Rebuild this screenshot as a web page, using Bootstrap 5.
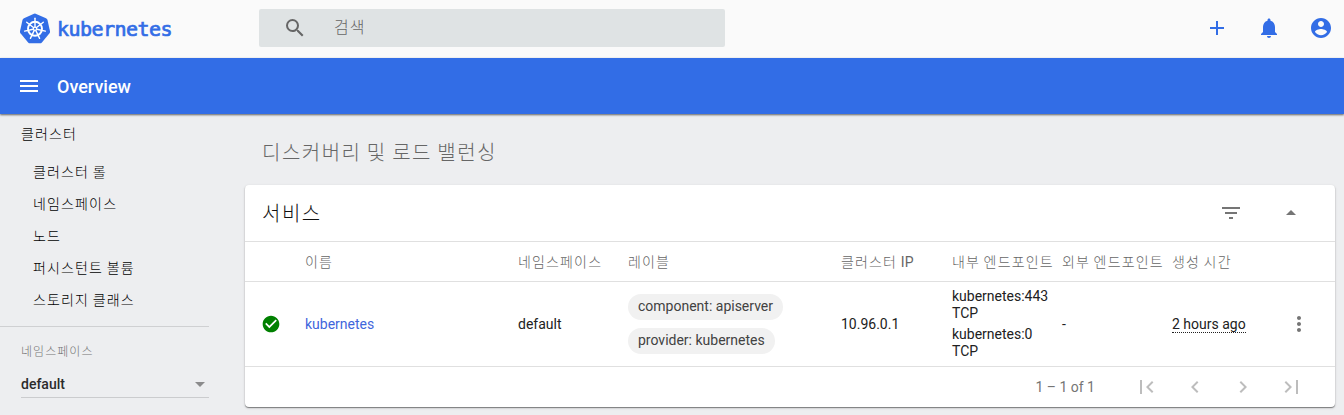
<!DOCTYPE html>
<html lang="ko">
<head>
<meta charset="utf-8">
<meta name="viewport" content="width=device-width, initial-scale=1">
<title>Kubernetes Dashboard</title>
<link href="https://cdn.jsdelivr.net/npm/bootstrap@5.3.0/dist/css/bootstrap.min.css" rel="stylesheet">
<style>
  body { font-family: Roboto, "Noto Sans CJK KR", sans-serif; font-size: 14px; line-height: 17px; background: #edeef0; color: #212121; height: 100vh; overflow: hidden; }
  svg { display: block; flex: none; fill: currentColor; }
  .ko { font-family: Roboto, "Noto Sans CJK KR", sans-serif; font-weight: 300; letter-spacing: 1.15px; word-spacing: -1px; white-space: nowrap; }
  .topbar { height: 58px; background: #fafafa; color: #326de6; }
  .brand { width: 239px; gap: 7px; margin-top: -2px; }
  .wordmark { font: 20px/24px "DejaVu Sans Mono", monospace; letter-spacing: -.55px; -webkit-text-stroke: .7px #326de6; padding-top: 2px; }
  .searchbox { width: 466px; height: 38px; background: #dfe3e4; border-radius: 2px; color: #666; padding-left: 24px; margin-top: -2px; }
  .search-hint { padding: 0 0 2px 27px; }
  .top-tools { gap: 28px; padding-right: 11px; margin-top: -2px; }
  .actionbar { height: 56px; background: #326de6; color: #fff; box-shadow: 0 1px 2px rgba(0,0,0,.6); position: relative; font-size: 18px; font-weight: 500; }
  .sidebar { width: 209px; color: #000; }
  .sidebar .nav-link { height: 32px; line-height: 32px; padding: 0 0 0 33px; color: #000; }
  .side-title { height: 42px; line-height: 41px; padding-left: 21px; }
  .ns-box { border-top: 1px solid #cfd0d2; margin-top: 10px; padding: 17px 0 0 21px; }
  .ns-label { font-size: 12px; line-height: 16px; color: #757575; letter-spacing: 1.05px; }
  .ns-select { height: 38px; padding-top: 16px; border-bottom: 1px solid #cbccce; font-weight: 500; color: #2b2b2c; }
  .caret { color: #8b8b8c; margin: 6px 4px 0 0; }
  .page-title { font-size: 20px; line-height: 24px; color: #666; letter-spacing: 1.5px; padding: 2px 0 0 17px; margin-top: 25px; height: 46px; }
  .panel { width: 1090px; border: 0; border-radius: 4px; box-shadow: 0 1px 1px rgba(0,0,0,.42), 0 1px 3px rgba(0,0,0,.16); }
  .panel-head { height: 57px; border-bottom: 1px solid #e0e0e0; padding: 0 32px 0 17px; }
  .panel-head h2 { font-size: 20px; letter-spacing: 1.5px; margin: 0; padding-top: 2px; color: #111; }
  .panel-head .tools { gap: 36px; color: #757575; }
  .services { table-layout: fixed; width: 1090px; margin: 0; color: #212121; border-collapse: separate; border-spacing: 0; }
  .services th, .services td { padding: 0; border-bottom: 1px solid #e0e0e0; vertical-align: middle; }
  .services th { height: 40px; color: #666; padding-top: 1px; }
  .services td { height: 85px; }
  .services a { color: #3f66dc; text-decoration: none; }
  .chip { display: block; width: fit-content; height: 26px; line-height: 24px; padding: 0 10px; border-radius: 13px; background: #f1f1f1; color: #424242; }
  .chip + .chip { margin-top: 8px; }
  .age { border-bottom: 1px dotted #212121; line-height: 15px; display: inline-block; margin-top: 1px; }
  .pager { height: 40px; color: #bdbdbd; padding-right: 32px; gap: 24px; }
  .pager .range { color: #757575; margin-right: 16px; }
</style>
</head>
<body>
<header class="topbar d-flex align-items-center">
  <div class="brand d-flex align-items-center flex-shrink-0 ms-3 ps-1 me-1">
    <svg width="30" height="31" viewBox="0 0 30 31">
      <path d="M15 .5 26 5.2q1.2.6 1.5 1.8L30 18.2q.2 1.1-.5 2l-7.6 9.2q-.8.9-2 .9h-9.800q-1.200 0-2-.9L.5 20.200q-.7-.9-.5-2L2.500 7q.3-1.200 1.500-1.800L14 .7q.5-.2 1-.2Z"/>
      <g fill="none" stroke="#fff" stroke-linecap="round">
        <circle cx="15" cy="15.800" r="7" stroke-width="1.900"/>
        <circle cx="15" cy="15.800" r="1.600" stroke-width="1.200"/>
        <g stroke-width="1.400">
          <path id="spoke" d="M15 13.800V5.200"/>
          <use href="#spoke" transform="rotate(51.430 15 15.800)"/>
          <use href="#spoke" transform="rotate(102.860 15 15.800)"/>
          <use href="#spoke" transform="rotate(154.290 15 15.800)"/>
          <use href="#spoke" transform="rotate(205.710 15 15.800)"/>
          <use href="#spoke" transform="rotate(257.140 15 15.800)"/>
          <use href="#spoke" transform="rotate(308.570 15 15.800)"/>
        </g>
      </g>
    </svg>
    <span class="wordmark">kubernetes</span>
  </div>
  <div class="searchbox d-flex align-items-center">
    <svg width="24" height="24" viewBox="0 0 24 24"><path d="M15.500 14h-.79l-.28-.27A6.471 6.471 0 0 0 16 9.500 6.500 6.500 0 1 0 9.500 16c1.610 0 3.090-.59 4.230-1.570l.27.28v.79l5 4.990L20.490 19l-4.990-5zm-6 0C7.010 14 5 11.990 5 9.500S7.010 5 9.500 5 14 7.010 14 9.500 11.990 14 9.500 14z"/></svg>
    <span class="search-hint ko fs-6">검색</span>
  </div>
  <div class="top-tools d-flex ms-auto">
    <svg width="24" height="24" viewBox="0 0 24 24"><path d="M19 13h-6v6h-2v-6H5v-2h6V5h2v6h6v2z"/></svg>
    <svg width="24" height="24" viewBox="0 0 24 24"><path d="M12 22c1.100 0 2-.9 2-2h-4c0 1.100.89 2 2 2zm6-6v-5c0-3.070-1.640-5.640-4.500-6.320V4c0-.83-.67-1.500-1.500-1.500s-1.500.67-1.500 1.500v.68C7.630 5.360 6 7.920 6 11v5l-2 2v1h16v-1l-2-2z"/></svg>
    <svg width="24" height="24" viewBox="0 0 24 24"><path d="M12 2C6.480 2 2 6.480 2 12s4.480 10 10 10 10-4.480 10-10S17.520 2 12 2zm0 3c1.660 0 3 1.340 3 3s-1.340 3-3 3-3-1.340-3-3 1.340-3 3-3zm0 14.200c-2.500 0-4.710-1.280-6-3.220.03-1.990 4-3.080 6-3.080 1.990 0 5.970 1.090 6 3.080-1.290 1.940-3.500 3.220-6 3.220z"/></svg>
  </div>
</header>
<div class="actionbar d-flex align-items-center">
  <svg class="ms-3" width="26" height="24" viewBox="1 0 24 24"><path d="M4 18h18v-2H4v2zm0-5h18v-2H4v2zm0-7v2h18V6H4z"/></svg>
  <span style="padding-left:15px">Overview</span>
</div>
<div class="d-flex">
  <nav class="sidebar flex-shrink-0">
    <div class="side-title ko">클러스터</div>
    <div class="nav flex-column ko">
      <a class="nav-link" href="#">클러스터 롤</a>
      <a class="nav-link" href="#">네임스페이스</a>
      <a class="nav-link" href="#">노드</a>
      <a class="nav-link" href="#">퍼시스턴트 볼륨</a>
      <a class="nav-link" href="#">스토리지 클래스</a>
    </div>
    <div class="ns-box">
      <div class="ns-label ko">네임스페이스</div>
      <div class="ns-select d-flex justify-content-between">
        <span>default</span>
        <svg class="caret" width="10" height="5" viewBox="0 0 10 5"><path d="M0 0h10L5 5z"/></svg>
      </div>
    </div>
  </nav>
  <main style="padding-left:36px">
    <h1 class="page-title ko mb-0">디스커버리 및 로드 밸런싱</h1>
    <section class="card panel">
      <div class="panel-head d-flex align-items-center justify-content-between">
        <h2 class="ko">서비스</h2>
        <div class="tools d-flex">
          <svg width="24" height="24" viewBox="0 0 24 24"><path d="M10 18h4v-2h-4v2zM3 6v2h18V6H3zm3 7h12v-2H6v2z"/></svg>
          <svg width="24" height="24" viewBox="0 0 24 24"><path d="m7 14 5-5 5 5z"/></svg>
        </div>
      </div>
      <table class="table services">
        <colgroup><col style="width:60px"><col style="width:213px"><col style="width:110px"><col style="width:213px"><col style="width:111px"><col style="width:110px"><col style="width:110px"><col></colgroup>
        <thead>
          <tr><th></th><th class="ko">이름</th><th class="ko">네임스페이스</th><th class="ko">레이블</th><th class="ko">클러스터 <span style="letter-spacing:.2px;font-weight:400">IP</span></th><th class="ko">내부 엔드포인트</th><th class="ko">외부 엔드포인트</th><th class="ko">생성 시간</th></tr>
        </thead>
        <tbody>
          <tr>
            <td><svg style="margin-left:16px;color:#008000" width="20" height="20" viewBox="0 0 24 24"><path d="M12 2C6.480 2 2 6.480 2 12s4.480 10 10 10 10-4.480 10-10S17.520 2 12 2zm-2 15-5-5 1.410-1.410L10 14.170l7.590-7.590L19 8l-9 9z"/></svg></td>
            <td><a href="#">kubernetes</a></td>
            <td>default</td>
            <td><span class="chip">component: apiserver</span><span class="chip">provider: kubernetes</span></td>
            <td>10.96.0.1</td>
            <td><div class="mb-1">kubernetes:443<br>TCP</div><div>kubernetes:0<br>TCP</div></td>
            <td>-</td>
            <td><div class="d-flex align-items-center justify-content-between"><span class="age">2 hours ago</span><svg style="margin-right:24px;color:#757575" width="24" height="24" viewBox="0 0 24 24"><path d="M12 8c1.100 0 2-.9 2-2s-.9-2-2-2-2 .9-2 2 .9 2 2 2zm0 2c-1.100 0-2 .9-2 2s.9 2 2 2 2-.9 2-2-.9-2-2-2zm0 6c-1.100 0-2 .9-2 2s.9 2 2 2 2-.9 2-2-.9-2-2-2z"/></svg></div></td>
          </tr>
        </tbody>
      </table>
      <div class="pager d-flex align-items-center justify-content-end">
        <span class="range">1 – 1 of 1</span>
        <svg width="24" height="24" viewBox="0 0 24 24"><path d="M18.410 16.590 13.820 12l4.590-4.590L17 6l-6 6 6 6zM5 5h2v14H5z"/></svg>
        <svg width="24" height="24" viewBox="0 0 24 24"><path d="M15.410 7.410 14 6l-6 6 6 6 1.410-1.410L10.830 12z"/></svg>
        <svg width="24" height="24" viewBox="0 0 24 24"><path d="M10 6 8.590 7.410 13.170 12l-4.580 4.590L10 18l6-6z"/></svg>
        <svg width="24" height="24" viewBox="0 0 24 24"><path d="M5.590 7.410 10.180 12l-4.590 4.590L7 18l6-6-6-6zM17 5h2v14h-2z"/></svg>
      </div>
    </section>
  </main>
</div>
<script src="https://cdn.jsdelivr.net/npm/bootstrap@5.3.0/dist/js/bootstrap.bundle.min.js"></script>
</body>
</html>
